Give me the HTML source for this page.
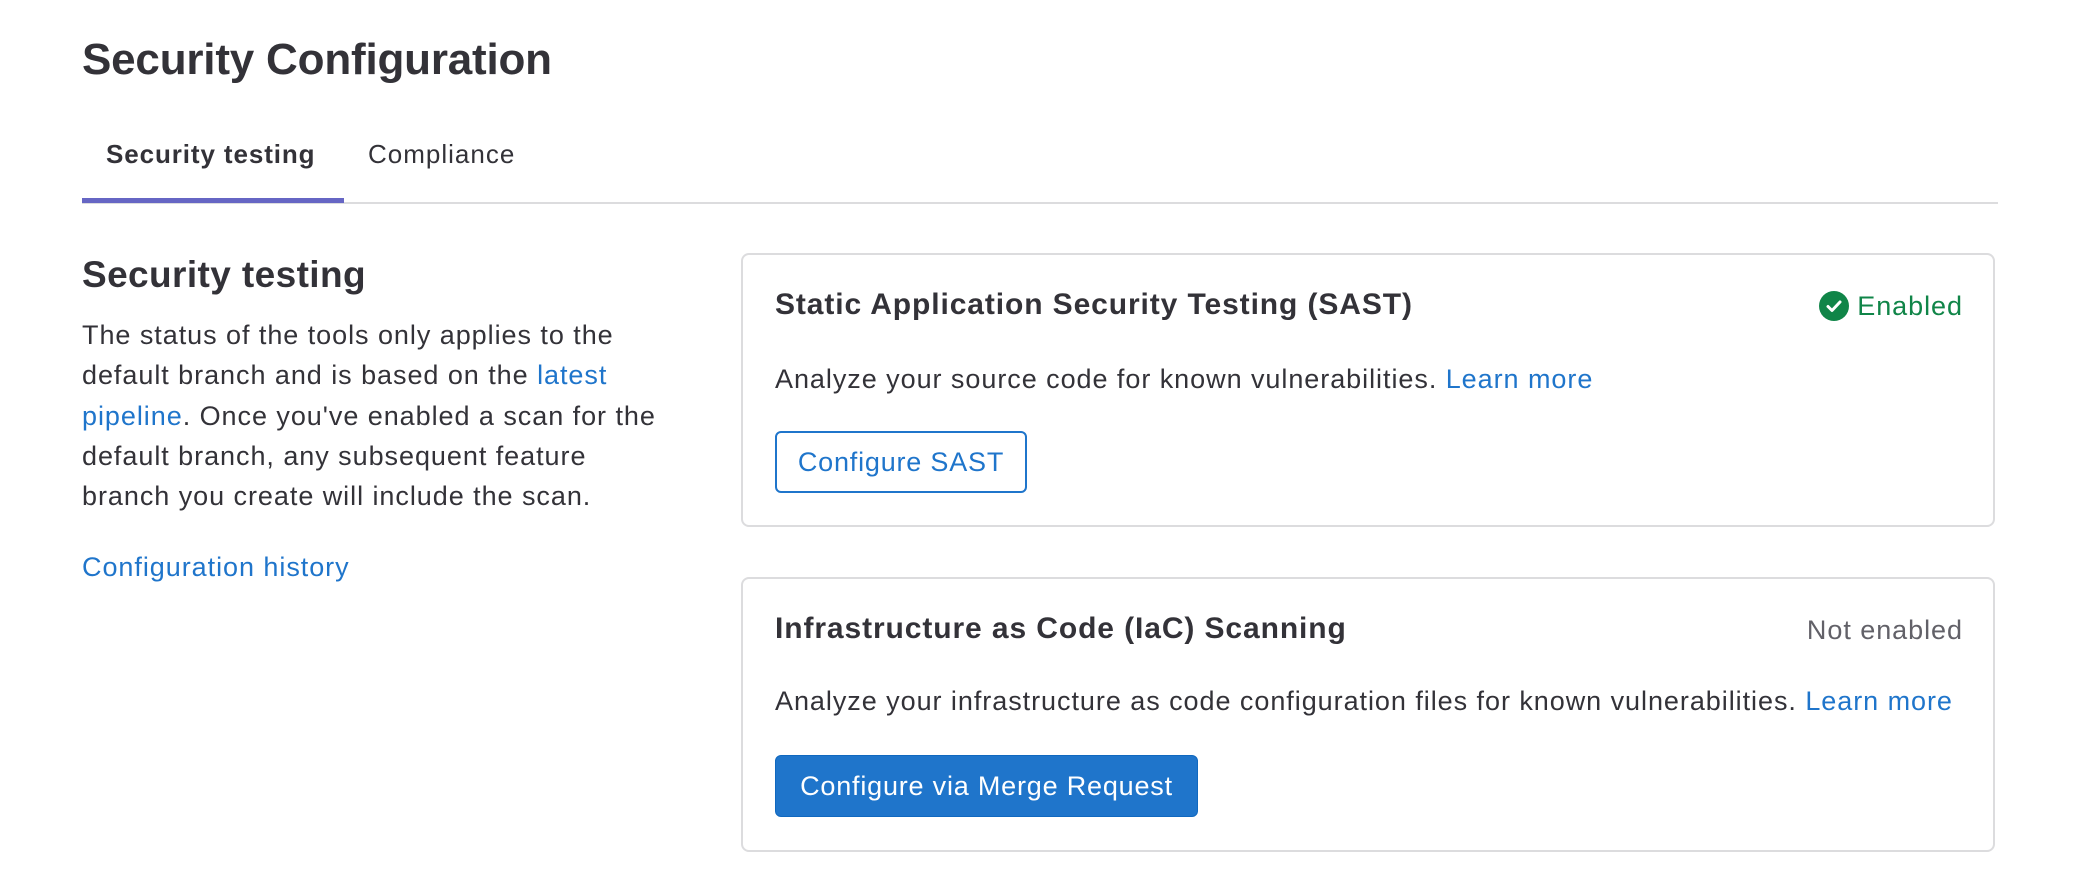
<!DOCTYPE html>
<html><head><meta charset="utf-8"><style>
body{margin:0;width:2098px;height:878px;background:#fff;font-family:"Liberation Sans",sans-serif;color:#333238;position:relative;overflow:hidden}
.a{position:absolute;white-space:nowrap}
a{color:#1f75cb;text-decoration:none}
.card{position:absolute;left:741px;width:1254px;border:2px solid #dcdcde;border-radius:8px;box-sizing:border-box}
.t{font-weight:bold;font-size:30px;line-height:36px;letter-spacing:0.9px}
.d{font-size:27px;line-height:32px;letter-spacing:0.95px}
.btn{position:absolute;left:775px;border-radius:6px;font-size:27px;letter-spacing:0.8px;display:flex;align-items:center;justify-content:center;box-sizing:border-box}
</style></head><body>
<div class="a" style="left:82px;top:32px;font-size:44px;font-weight:bold;line-height:56px;letter-spacing:-0.2px">Security Configuration</div>
<div class="a" style="left:106px;top:138px;font-size:26px;font-weight:bold;line-height:32px;letter-spacing:0.9px">Security testing</div>
<div class="a" style="left:368px;top:138px;font-size:26px;line-height:32px;letter-spacing:1px">Compliance</div>
<div class="a" style="left:82px;top:202px;width:1916px;height:2px;background:#dcdcde"></div>
<div class="a" style="left:82px;top:198px;width:262px;height:5px;background:#6666c4"></div>

<div class="a" style="left:82px;top:254px;font-size:37px;font-weight:bold;line-height:42px;letter-spacing:0.4px">Security testing</div>
<div class="a" style="left:82px;top:315px;font-size:27px;line-height:40.3px;letter-spacing:0.95px;white-space:nowrap">The status of the tools only applies to the<br>default branch and is based on the <a>latest</a><br><a>pipeline</a>. Once you've enabled a scan for the<br>default branch, any subsequent feature<br>branch you create will include the scan.</div>
<div class="a d" style="left:82px;top:551px"><a>Configuration history</a></div>

<div class="card" style="top:253px;height:274px"></div>
<div class="a t" style="left:775px;top:287px">Static Application Security Testing (SAST)</div>
<div class="a" style="left:1819px;top:291px;width:30px;height:30px;border-radius:50%;background:#108548"><svg width="30" height="30" viewBox="0 0 30 30"><path d="M9 15.5l4 4 8-8.5" fill="none" stroke="#fff" stroke-width="3" stroke-linecap="round" stroke-linejoin="round"/></svg></div>
<div class="a d" style="right:135px;top:290px;color:#108548">Enabled</div>
<div class="a d" style="left:775px;top:363px">Analyze your source code for known vulnerabilities. <a>Learn more</a></div>
<div class="btn" style="top:431px;width:252px;height:62px;border:2px solid #1f75cb;color:#1f75cb">Configure SAST</div>

<div class="card" style="top:577px;height:275px"></div>
<div class="a t" style="left:775px;top:611px">Infrastructure as Code (IaC) Scanning</div>
<div class="a d" style="right:135px;top:614px;color:#626168">Not enabled</div>
<div class="a d" style="left:775px;top:685px">Analyze your infrastructure as code configuration files for known vulnerabilities. <a>Learn more</a></div>
<div class="btn" style="top:755px;width:423px;height:62px;background:#1f75cb;border:1px solid #1068bf;color:#fff">Configure via Merge Request</div>
</body></html>
